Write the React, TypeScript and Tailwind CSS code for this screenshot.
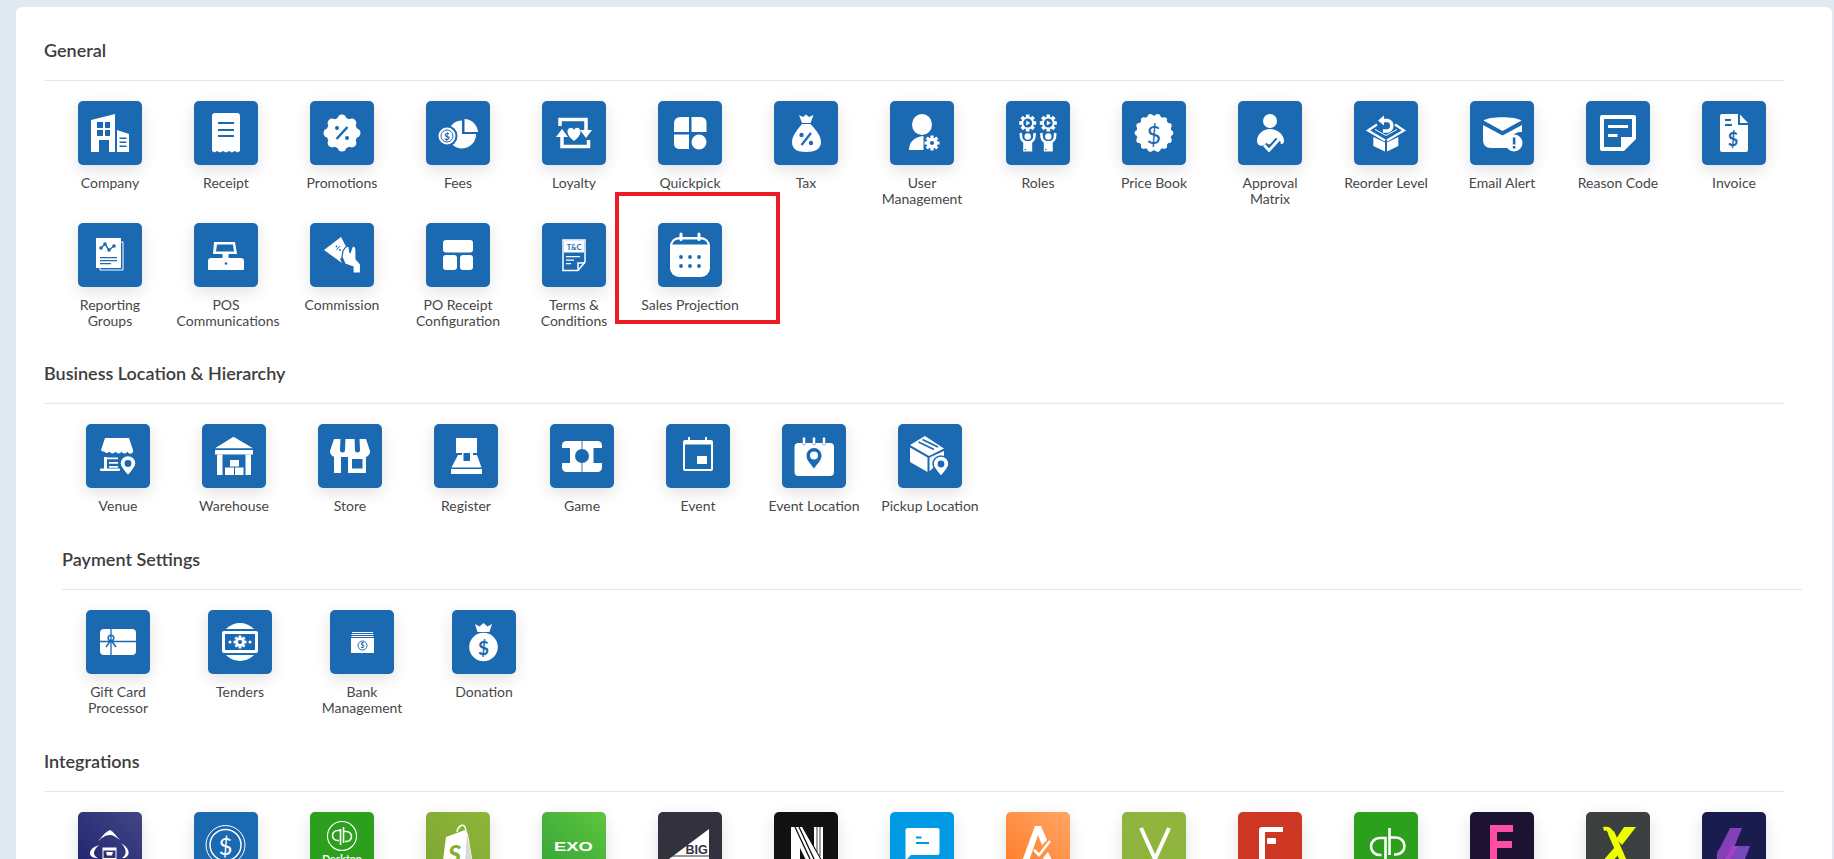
import type { ReactNode } from 'react'

const B = '#1a69b1'
const W = '#ffffff'

type Item = { label: string; icon: ReactNode; bg?: string }

function Scallop({ cx = 32, cy = 32, r = 14, bump = 5.5, n = 8, off = 12.5 }: { cx?: number; cy?: number; r?: number; bump?: number; n?: number; off?: number }) {
  const dots = Array.from({ length: n }, (_, i) => {
    const a = (i / n) * Math.PI * 2
    return <circle key={i} cx={cx + Math.cos(a) * off} cy={cy + Math.sin(a) * off} r={bump} fill={W} />
  })
  return (
    <g>
      <circle cx={cx} cy={cy} r={r} fill={W} />
      {dots}
    </g>
  )
}

function Dollar({ x, y, size = 14, fill = B, weight = 700 }: { x: number; y: number; size?: number; fill?: string; weight?: number }) {
  return (
    <text x={x} y={y} fontSize={size} fontWeight={weight} fontFamily="Lato, sans-serif" fill={fill} textAnchor="middle" dominantBaseline="central">
      $
    </text>
  )
}

function Gear({ cx, cy, r, hole = 0.38 }: { cx: number; cy: number; r: number; hole?: number }) {
  const teeth = Array.from({ length: 4 }, (_, i) => (
    <rect key={i} x={cx - r * 0.21} y={cy - r} width={r * 0.42} height={r * 2} fill={W} transform={`rotate(${i * 45} ${cx} ${cy})`} />
  ))
  return (
    <g>
      {teeth}
      <circle cx={cx} cy={cy} r={r * 0.74} fill={W} />
      <circle cx={cx} cy={cy} r={r * hole} fill={B} />
    </g>
  )
}

function Pin({ x, y, s = 1 }: { x: number; y: number; s?: number }) {
  return (
    <g transform={`translate(${x} ${y}) scale(${s})`}>
      <path d="M0 0 C-5 -6 -8 -9 -8 -12.500 A8 8 0 1 1 8 -12.500 C8 -9 5 -6 0 0 Z" fill={W} stroke={B} strokeWidth="1.500" />
      <circle cx="0" cy="-12.500" r="3.400" fill={B} />
    </g>
  )
}

const Company = (
  <>
    <path d="M13 19 L37 13 V51 H31 V39 H21 V51 H13 Z" fill={W} />
    <path d="M19 21h6v6h-6zM27 21h5v6h-5zM19 29h6v6h-6zM27 29h5v6h-5z" fill={B} />
    <path d="M39 29 L51 33 V51 H39 Z" fill={W} />
    <path d="M41.500 36.500h7v1.500h-7zM41.500 40.500h7v1.500h-7zM41.500 44.500h7v1.500h-7z" fill={B} />
  </>
)

const Receipt = (
  <>
    <path d="M21 12 H43 A3 3 0 0 1 46 15 V50 L43.500 51.500 L41 50 L38 51.500 L35 50 L32 51.500 L29 50 L26 51.500 L23 50 L20.500 51.500 L18 50 V15 A3 3 0 0 1 21 12 Z" fill={W} />
    <path d="M24 21h16v2h-16zM24 28h16v2h-16zM24 34h16v2h-16z" fill={B} />
  </>
)

const Promotions = (
  <>
    <Scallop r={15.500} off={14} bump={4.500} />
    <path d="M26.500 38 L37.500 26" stroke={B} strokeWidth="2.500" />
    <circle cx="27" cy="27" r="2" fill={B} />
    <circle cx="37" cy="37" r="2" fill={B} />
  </>
)

const Fees = (
  <>
    <path d="M36 19.500 V33 H50 A14 14 0 1 1 36 19.500 Z" fill={W} />
    <path d="M38.500 18 A14 14 0 0 1 52 31 H38.500 Z" fill={W} />
    <circle cx="21" cy="35" r="10.500" fill={B} />
    <circle cx="21" cy="35" r="8.500" fill={W} />
    <circle cx="21" cy="35" r="6" fill={W} stroke={B} strokeWidth="1" />
    <Dollar x={21} y={35} size={10} />
  </>
)

const Loyalty = (
  <>
    <path d="M18 25 V18.500 H44 V30" fill="none" stroke={W} strokeWidth="3.500" />
    <path d="M38 29 H50 L44 37 Z" fill={W} />
    <path d="M46.500 39 V45.500 H20 V35" fill="none" stroke={W} strokeWidth="3.500" />
    <path d="M14 36 H26 L20 28 Z" fill={W} />
    <path d="M32 40 C27 36 25.500 33 25.500 30.500 C25.500 26.500 30.500 25.500 32 29 C33.500 25.500 38.500 26.500 38.500 30.500 C38.500 33 37 36 32 40 Z" fill={W} />
  </>
)

const Quickpick = (
  <>
    <path d="M22 16 H31 V31 H16 V22 A6 6 0 0 1 22 16 Z" fill={W} />
    <path d="M33.500 16 H43 A5.500 5.500 0 0 1 48.500 21.500 V31 H33.500 Z" fill={W} />
    <path d="M16 33.500 H31 V48 H21 A5 5 0 0 1 16 43 Z" fill={W} />
    <circle cx="41" cy="41" r="7.500" fill={W} />
  </>
)

const Tax = (
  <>
    <path d="M25 14 L29 16 L32 13.500 L35 16 L39.500 14 L36.500 22 H28 Z" fill={W} />
    <path d="M28 23 H36.500 C42 29 47 35 47 41 C47 48 41 51 32 51 C23 51 18 48 18 41 C18 35 23 29 28 23 Z" fill={W} />
    <path d="M27.500 44 L37 32" stroke={B} strokeWidth="2.200" />
    <circle cx="27.500" cy="34" r="2.200" fill={B} />
    <circle cx="37" cy="42" r="2.200" fill={B} />
  </>
)

const UserManagement = (
  <>
    <ellipse cx="32" cy="23.500" rx="10" ry="10.500" fill={W} />
    <path d="M19 49 C19 41 24 36 33.500 35 V49 Z" fill={W} />
    <Gear cx={42} cy={42} r={7.500} hole={0.28} />
  </>
)

const person = (x: number) => (
  <g key={x}>
    <path d={`M${x - 7} 32 L${x - 6.500} 37 C${x - 6} 39.500 ${x - 4} 40.500 ${x - 3} 41 M${x + 7} 32 L${x + 6.500} 37 C${x + 6} 39.500 ${x + 4} 40.500 ${x + 3} 41`} fill="none" stroke={W} strokeWidth="2.600" />
    <circle cx={x} cy="35.500" r="3.200" fill={W} />
    <rect x={x - 4.500} y="40" width="9" height="10.500" fill={W} />
    <circle cx={x - 2.500} cy="48.500" r="0.800" fill={B} />
  </g>
)

const gearPlay = (x: number) => (
  <g key={x}>
    <Gear cx={x} cy={22} r={8.500} hole={0.52} />
    <path d={`M${x - 1.500} 19.500 L${x + 2.500} 22 L${x - 1.500} 24.500 Z`} fill={W} />
  </g>
)

const Roles = (
  <>
    {gearPlay(21.700)}
    {gearPlay(42.300)}
    {person(21.700)}
    {person(42.300)}
  </>
)

const PriceBook = (
  <>
    <Scallop r={17.500} off={16.500} bump={2.800} n={14} />
    <Dollar x={31.700} y={33} size={25} weight={400} />
  </>
)

const Approval = (
  <>
    <circle cx="32" cy="20" r="7" fill={W} />
    <path d="M19 40 C19 33 25 28 32 28 C39 28 46 33 46 40 C46 43 43.500 44 42 42 L26 44 C23 46 19 44 19 40 Z" fill={W} />
    <path d="M26 44 L31 49.500 L40.500 39" fill="none" stroke={B} strokeWidth="7" />
    <path d="M26 44 L31 49.500 L40.500 39" fill="none" stroke={W} strokeWidth="2.800" />
  </>
)

const Reorder = (
  <>
    <path d="M19.300 36 L31 41.500 V50.500 L19.300 45 Z" fill={W} />
    <path d="M33 41.500 L44.300 36 V45 L33 50.500 Z" fill={W} />
    <path d="M23 23.500 L14 29.500 L31 39.500" fill="none" stroke={W} strokeWidth="2.200" />
    <path d="M41 23.500 L50 29.500 L33 39.500" fill="none" stroke={W} strokeWidth="2.200" />
    <path d="M21 28.500 L32 34.500 L43 28.500" fill="none" stroke={W} strokeWidth="1" />
    <path d="M29 19.500 H34 A5.500 5.500 0 0 1 34 30 H29" fill="none" stroke={W} strokeWidth="3.400" />
    <path d="M24 19.500 L30 14.500 V24.500 Z" fill={W} />
  </>
)

const EmailAlert = (
  <>
    <path d="M13.500 19.500 C19 15 45 15 51.500 19.500 L32.500 30 Z" fill={W} />
    <path d="M13 24 L32.500 34.500 L52 24 V31 C46 30 39 35 38 47 H21 C16 47 13 44 13 39 Z" fill={W} />
    <circle cx="44" cy="42" r="8.500" fill={W} />
    <rect x="42.800" y="36.500" width="2.600" height="7" fill={B} />
    <rect x="42.800" y="45" width="2.600" height="2.600" fill={B} />
  </>
)

const ReasonCode = (
  <>
    <path d="M16 14 H48 A2 2 0 0 1 50 16 V38 L38 50 H16 A2 2 0 0 1 14 48 V16 A2 2 0 0 1 16 14 Z" fill={W} />
    <path d="M18 18 H46 V36 H35 V46 H18 Z" fill={B} />
    <rect x="22" y="24" width="20" height="3" fill={W} />
    <rect x="22" y="33" width="9.500" height="3" fill={W} />
  </>
)

const Invoice = (
  <>
    <path d="M20 13 H36 V24 H46 V49 A2 2 0 0 1 44 51 H20 A2 2 0 0 1 18 49 V15 A2 2 0 0 1 20 13 Z" fill={W} />
    <path d="M38 13.500 L46 22 H38 Z" fill={W} />
    <path d="M23 18h6v2h-6zM23 23h7v2h-7z" fill={B} />
    <Dollar x={31} y={38} size={18} />
  </>
)

const ReportingGroups = (
  <>
    <path d="M22 19 H45 V47 H22 Z" fill="none" stroke={W} strokeWidth="1" />
    <path d="M18 15 H43 V45 H18 Z" fill={W} />
    <path d="M23 25 L27 21 L31 27 L36 23" fill="none" stroke={B} strokeWidth="1.400" />
    <circle cx="23" cy="25" r="1.800" fill={B} />
    <circle cx="27" cy="21" r="1.800" fill={B} />
    <circle cx="31" cy="27" r="1.800" fill={B} />
    <circle cx="36" cy="23" r="1.800" fill={B} />
    <path d="M22 34h17v1.200h-17zM22 37h17v1.200h-17zM22 40h11v1.200h-11z" fill={B} />
  </>
)

const Pos = (
  <>
    <path d="M20 19 H41 L43 31 H19 Z" fill={W} />
    <path d="M23 21.500 H39 L40 28.500 H22 Z" fill={B} />
    <rect x="28.500" y="30" width="6" height="5" fill={W} />
    <path d="M17 35 H47 A3 3 0 0 1 50 38 V46 A1 1 0 0 1 49 47 H15 A1 1 0 0 1 14 46 V38 A3 3 0 0 1 17 35 Z" fill={W} />
    <circle cx="32" cy="40.500" r="1.300" fill={B} />
  </>
)

const Commission = (
  <>
    <path d="M14 27 L31 14 L41 33 L35 38 L33 33 L30 36 L32 40 Z" fill={W} />
    <path d="M26.500 27 L30 23" stroke={B} strokeWidth="1" />
    <circle cx="26.500" cy="23.500" r="0.900" fill={B} />
    <circle cx="30" cy="27" r="0.900" fill={B} />
    <path d="M33 28 C35 24 38 22 39 24 L40 30 L42 24 C44 22 46 24 46 27 V36 L50.500 41 V50 H43 V44 L35 41 L32 34 Z" fill={W} stroke={B} strokeWidth="1.200" />
  </>
)

const PoConfig = (
  <>
    <rect x="17" y="17" width="30" height="12.500" rx="3" fill={W} />
    <rect x="17" y="32" width="14" height="15" rx="3" fill={W} />
    <rect x="34" y="32" width="13" height="15" rx="3" fill={W} />
  </>
)

const Terms = (
  <>
    <path d="M21 17 H43 V39 L36 47.500 H21 Z" fill="none" stroke={W} strokeWidth="1.500" />
    <rect x="22" y="17.500" width="20" height="12" fill={W} />
    <text x="32" y="26.500" fontSize="7.500" fontWeight={700} fontFamily="Lato, sans-serif" fill={B} textAnchor="middle">
      T&amp;C
    </text>
    <path d="M24 33h14v1.200h-14zM24 36.500h8v1.200h-8zM24 40h5v1.200h-5z" fill={W} />
    <path d="M36 47 V40 H43" fill="none" stroke={W} strokeWidth="1.500" />
  </>
)

const SalesProjection = (
  <>
    <path d="M21 14 H43 A9 9 0 0 1 52 23 V45 A9 9 0 0 1 43 54 H21 A9 9 0 0 1 12 45 V23 A9 9 0 0 1 21 14 Z" fill={W} />
    <path d="M21 16.500 H43 A7 7 0 0 1 49.700 21.500 H14.300 A7 7 0 0 1 21 16.500 Z" fill={B} />
    <rect x="21.500" y="9.500" width="3" height="8.500" rx="1.500" fill={W} />
    <rect x="39.500" y="9.500" width="3" height="8.500" rx="1.500" fill={W} />
    {[23, 32, 41].map((x) => (
      <g key={x}>
        <circle cx={x} cy="34" r="1.900" fill={B} />
        <circle cx={x} cy="43" r="1.900" fill={B} />
      </g>
    ))}
  </>
)

const Venue = (
  <>
    <path d="M19 14 H43 L47 26 A2.800 2.800 0 0 1 41.500 27.500 A3.300 3.300 0 0 1 35.500 27.500 A3.300 3.300 0 0 1 29.500 27.500 A3.300 3.300 0 0 1 23.500 27.500 A3.300 3.300 0 0 1 18 27.500 A2.800 2.800 0 0 1 15 26 Z" fill={W} />
    <rect x="18" y="33" width="3" height="12" fill={W} />
    <rect x="14" y="44.500" width="20" height="2.500" rx="1" fill={W} />
    <path d="M21 33.500h11v1.800h-11zM23 38h9v1.800h-9zM23 42h9v1.800h-9z" fill={W} />
    <Pin x={42} y={52} s={1} />
  </>
)

const Warehouse = (
  <>
    <path d="M31.500 12.700 L51 24.300 H13 Z" fill={W} />
    <rect x="13" y="26" width="38" height="4.500" fill={W} />
    <rect x="15" y="30.500" width="5.500" height="20.500" fill={W} />
    <rect x="43.500" y="30.500" width="5.500" height="20.500" fill={W} />
    <rect x="23" y="43.500" width="9" height="7.500" fill={W} />
    <rect x="33" y="43.500" width="8.500" height="7.500" fill={W} />
    <rect x="28" y="36" width="9" height="6.500" fill={W} />
  </>
)

const Store = (
  <>
    <path d="M16 15 H48 L52 27 C52 31 49 33 47 33 H18 C15 33 12 31 12 27 Z" fill={W} />
    <path d="M22.500 14 H27.500 L27 26 A2.500 2.500 0 0 1 22 26 Z" fill={B} />
    <path d="M36.500 14 H41.500 L42 26 A2.500 2.500 0 0 1 37 26 Z" fill={B} />
    <rect x="16" y="33" width="7" height="16" fill={W} />
    <rect x="30" y="33" width="18" height="16" fill={W} />
    <rect x="34" y="35" width="10.500" height="9.500" fill={B} />
  </>
)

const Register = (
  <>
    <rect x="22" y="14" width="21" height="15" fill={W} />
    <path d="M24 31 H43 L47.500 43.500 H17.500 Z" fill={W} />
    <rect x="28" y="29" width="11" height="9.500" fill={W} />
    <rect x="29.500" y="29" width="6.500" height="8" fill={B} />
    <rect x="17" y="45" width="31" height="5" fill={W} />
  </>
)

const Game = (
  <>
    <rect x="12" y="17" width="40" height="31" rx="4.500" fill={W} />
    <rect x="12" y="24" width="8" height="15" fill={B} />
    <rect x="43.500" y="24" width="8.500" height="15" fill={B} />
    <circle cx="32" cy="32" r="7" fill={B} />
    <path d="M32 17 V48" stroke={B} strokeWidth="0.900" />
  </>
)

const Event = (
  <>
    <rect x="17" y="16" width="30" height="31" rx="2" fill={W} />
    <rect x="19" y="20.500" width="26" height="24.500" fill={B} />
    <rect x="22" y="13" width="2" height="5" fill={W} />
    <rect x="39" y="13" width="2" height="5" fill={W} />
    <rect x="31" y="32" width="10" height="8" fill={W} />
  </>
)

const EventLocation = (
  <>
    <rect x="12.500" y="19" width="39.500" height="33" rx="4" fill={W} />
    <rect x="20.500" y="13" width="3" height="8" rx="1.500" fill={W} stroke={B} strokeWidth="0.500" />
    <rect x="30.500" y="13" width="3" height="8" rx="1.500" fill={W} stroke={B} strokeWidth="0.500" />
    <rect x="40.500" y="13" width="3" height="8" rx="1.500" fill={W} stroke={B} strokeWidth="0.500" />
    <path d="M32 44.500 C28 39 24.500 36 24.500 31.500 A7.500 7.500 0 0 1 39.500 31.500 C39.500 36 36 39 32 44.500 Z" fill={B} />
    <circle cx="32" cy="31.500" r="4" fill={W} />
  </>
)

const PickupLocation = (
  <>
    <path d="M12 21 L27 12 L46 24.500 L31 32 Z" fill={W} />
    <path d="M20.500 18 L36 25.500 M24.500 15.500 L40 23" stroke={B} strokeWidth="1.600" />
    <path d="M12 23.500 L29.500 33.500 V48 L12 38 Z" fill={W} />
    <path d="M31.500 33.500 L46 27 V33 L33 46 L31.500 47 Z" fill={W} />
    <Pin x={43} y={52.500} s={1} />
  </>
)

const GiftCard = (
  <>
    <rect x="14" y="19" width="36" height="26" rx="4" fill={W} />
    <path d="M14 31.500 H50 M25 19 V45" stroke={B} strokeWidth="1.300" />
    <circle cx="25" cy="28" r="2.800" fill="none" stroke={B} strokeWidth="1.500" />
    <path d="M25 30 L20 37 M25 30 L30 37" stroke={B} strokeWidth="1.500" />
  </>
)

const Tenders = (
  <>
    <circle cx="32" cy="32" r="19" fill={W} />
    <rect x="12" y="19" width="40" height="26" fill={B} />
    <rect x="14" y="21" width="36" height="22" rx="2" fill={W} />
    <rect x="17" y="24" width="30" height="16" fill={B} />
    <Gear cx={32} cy={32} r={6.500} hole={0.32} />
    <circle cx="22" cy="32" r="1.500" fill={W} />
    <circle cx="42" cy="32" r="1.500" fill={W} />
  </>
)

const Bank = (
  <>
    <path d="M22 22h21v1h-21zM21.500 24h22v1h-22zM21.500 26h22v1h-22z" fill={W} />
    <rect x="21" y="28" width="23" height="15" fill={W} />
    <circle cx="32.500" cy="35.500" r="4.500" fill="none" stroke={B} strokeWidth="1" />
    <Dollar x={32.500} y={35.500} size={6.500} />
  </>
)

const Donation = (
  <>
    <path d="M23 14 L27.500 16.500 L31.500 13 L35.500 16.500 L40 14 L37.500 22 H25.500 Z" fill={W} />
    <circle cx="31.500" cy="37" r="14.300" fill={W} />
    <Dollar x={31.500} y={37} size={19} />
  </>
)

const CloudCart = (
  <>
    <path d="M20 29 C24 25 27 20 32 18 C36 20 38 24 42 28 C38 25 35 23 32 23 C27 23 24 26 20 29 Z" fill={W} />
    <path d="M21 33 C14 35 10 40 13 44 C15 46 18 46 20 46 C15 44 14 39 21 33 Z" fill={W} />
    <path d="M43 31 C50 35 54 42 47 46 L44 46 C50 42 48 36 43 31 Z" fill={W} />
    <rect x="25" y="36" width="13" height="10.500" fill="none" stroke={W} strokeWidth="1" />
    <rect x="25" y="36" width="13" height="2.500" fill={W} />
    <path d="M28 40 H35 L34 43.500 H29 Z" fill={W} />
  </>
)

const DollarRing = (
  <>
    <circle cx="31.500" cy="33" r="19.500" fill="none" stroke={W} strokeWidth="1" />
    <circle cx="31.500" cy="33" r="15.500" fill="none" stroke={W} strokeWidth="1.500" />
    <Dollar x={31.500} y={33} size={24} fill={W} weight={400} />
  </>
)

const QbDesktop = (
  <>
    <circle cx="32" cy="24" r="14.500" fill="none" stroke={W} strokeWidth="1.100" />
    <path d="M30.500 17 V33 M30.500 18.500 H27.500 A5 5 0 0 0 27.500 28.500 H29 M33.500 31 V15 M33.500 19.500 H36.500 A5 5 0 0 1 36.500 29.500 H35" fill="none" stroke={W} strokeWidth="1.600" />
    <text x="32" y="50.500" fontSize="10.500" fontWeight={700} fontFamily="Lato, sans-serif" fill={W} textAnchor="middle">
      Desktop
    </text>
  </>
)

const Shopify = (
  <>
    <path d="M31 20 C32 14 37 11 39 15 C40 17 40 18 40 21" fill="none" stroke={W} strokeWidth="1.500" />
    <path d="M15 64 L20 25 L39 18 L42 22 L49 64 Z" fill={W} />
    <path d="M41 21 L49 64 H38 L41 21 Z" fill="#d9d9d9" />
    <text x="28.500" y="51" fontSize="25" fontWeight={900} fontStyle="italic" fontFamily="Lato, sans-serif" fill="#86ad38" textAnchor="middle">
      S
    </text>
  </>
)

const Exo = (
  <text x="12" y="38.500" fontSize="13" fontWeight={700} fontFamily="'Liberation Sans', sans-serif" fill={W} textLength={39} lengthAdjust="spacingAndGlyphs">
    EXO
  </text>
)

const BigC = (
  <>
    <path d="M51 17 V47 H11 Z" fill={W} />
    <rect x="11" y="43.500" width="40" height="1" fill="#34313f" />
    <text x="38.500" y="41.500" fontSize="12.500" fontWeight={900} fontFamily="'Liberation Sans', sans-serif" fill="#34313f" textAnchor="middle">
      BIG
    </text>
  </>
)

const NLogo = (
  <>
    <path d="M17 15 H28 L49 52 V64 H40 L26 36 V64 H17 Z" fill={W} />
    <path d="M40 15 H49 V50 L40 34 Z" fill={W} />
    <path d="M21 15 L43 62 M25 15 L47 62" stroke="#111111" strokeWidth="1.300" />
    <path d="M43 15 V40 M46 15 V44" stroke="#111111" strokeWidth="0.800" />
  </>
)

const Chat = (
  <>
    <path d="M17.500 16 H47.500 A2 2 0 0 1 49.500 18 V41 A2 2 0 0 1 47.500 43 H21 L17 47 H15.500 V18 A2 2 0 0 1 17.500 16 Z" fill={W} />
    <rect x="26" y="24.500" width="5.500" height="2" fill="#009ae4" />
    <rect x="26" y="30" width="13" height="2" fill="#009ae4" />
  </>
)

const ALogo = (
  <>
    <path d="M15 52 L29 14 H35 L41 28 L36 33 L32 23 L22 52 Z" fill={W} />
    <path d="M28 38 L33 43 L44 29" fill="none" stroke={W} strokeWidth="2.500" />
    <path d="M37 46 L42 40 L48 52 H41 Z" fill={W} />
  </>
)

const VLogo = <path d="M19 16 L33 47 L47 16" fill="none" stroke={W} strokeWidth="4" />

const FRed = (
  <>
    <path d="M21 64 V18 A3 3 0 0 1 24 15 H45 V20 H27 V64 Z" fill={W} />
    <rect x="29" y="26" width="9" height="6" rx="1" fill={W} />
  </>
)

const Qb = (
  <>
    <path d="M31.500 64 V26 H25.500 A8.500 8.500 0 0 0 25.500 43 H27.500" fill="none" stroke={W} strokeWidth="2.600" />
    <path d="M35.500 16 V43" fill="none" stroke={W} strokeWidth="2.600" />
    <path d="M35.500 25.500 H42 A8.500 8.500 0 0 1 42 42.500 H40" fill="none" stroke={W} strokeWidth="2.600" />
  </>
)

const FPink = <path d="M20 13 H43 V20 H27 V29 H42 V36 H27 V64 H20 Z" fill="#ff4fa3" />

const XLogo = (
  <>
    <path d="M17 15 C22 14 25 15 27 19 L40 47 C42 50 45 50 47 49 L50 47 C46 51 38 52 35 46 L22 21 C21 18 19 18 18 19 Z" fill="#eeff00" />
    <path d="M38 15 H50 L36 33 L30 27 Z" fill="#eeff00" />
    <path d="M29 35 L34 41 L24 52 H14 Z" fill="#eeff00" />
    <path d="M28 19 L40 47 L33 47 L22 22 Z" fill="#eeff00" />
  </>
)

const LLogo = (
  <>
    <path d="M28 16 H40 L31 38 C29 43 25 47 20 47 H15 C14 43 16 38 18 36 Z" fill="#8340b8" />
    <path d="M29 34 H48 L43 47 H20 C25 47 28 41 29 34 Z" fill="#7748bd" />
    <path d="M29 34 H36 L28 47 H22 C25 45 28 40 29 34 Z" fill="#a93fc4" />
  </>
)

const general: Item[] = [
  { label: 'Company', icon: Company },
  { label: 'Receipt', icon: Receipt },
  { label: 'Promotions', icon: Promotions },
  { label: 'Fees', icon: Fees },
  { label: 'Loyalty', icon: Loyalty },
  { label: 'Quickpick', icon: Quickpick },
  { label: 'Tax', icon: Tax },
  { label: 'User Management', icon: UserManagement },
  { label: 'Roles', icon: Roles },
  { label: 'Price Book', icon: PriceBook },
  { label: 'Approval\nMatrix', icon: Approval },
  { label: 'Reorder Level', icon: Reorder },
  { label: 'Email Alert', icon: EmailAlert },
  { label: 'Reason Code', icon: ReasonCode },
  { label: 'Invoice', icon: Invoice },
  { label: 'Reporting Groups', icon: ReportingGroups },
  { label: 'POS Communications', icon: Pos },
  { label: 'Commission', icon: Commission },
  { label: 'PO Receipt Configuration', icon: PoConfig },
  { label: 'Terms & Conditions', icon: Terms },
  { label: 'Sales Projection', icon: SalesProjection },
]

const business: Item[] = [
  { label: 'Venue', icon: Venue },
  { label: 'Warehouse', icon: Warehouse },
  { label: 'Store', icon: Store },
  { label: 'Register', icon: Register },
  { label: 'Game', icon: Game },
  { label: 'Event', icon: Event },
  { label: 'Event Location', icon: EventLocation },
  { label: 'Pickup Location', icon: PickupLocation },
]

const payment: Item[] = [
  { label: 'Gift Card Processor', icon: GiftCard },
  { label: 'Tenders', icon: Tenders },
  { label: 'Bank Management', icon: Bank },
  { label: 'Donation', icon: Donation },
]

const integrations: Item[] = [
  { label: '', icon: CloudCart, bg: 'bg-gradient-to-tr from-[#1f2170] to-[#434684]' },
  { label: '', icon: DollarRing },
  { label: '', icon: QbDesktop, bg: 'bg-[#2ca01c]' },
  { label: '', icon: Shopify, bg: 'bg-gradient-to-tr from-[#7da632] to-[#8fb53a]' },
  { label: '', icon: Exo, bg: 'bg-gradient-to-tr from-[#35a336] to-[#5cc53f]' },
  { label: '', icon: BigC, bg: 'bg-[#34313f]' },
  { label: '', icon: NLogo, bg: 'bg-[#111111]' },
  { label: '', icon: Chat, bg: 'bg-[#009ae4]' },
  { label: '', icon: ALogo, bg: 'bg-gradient-to-tr from-[#ff7a1f] to-[#ffa563]' },
  { label: '', icon: VLogo, bg: 'bg-[#8fb53f]' },
  { label: '', icon: FRed, bg: 'bg-[#cf3725]' },
  { label: '', icon: Qb, bg: 'bg-[#2ca01c]' },
  { label: '', icon: FPink, bg: 'bg-[#1e1233]' },
  { label: '', icon: XLogo, bg: 'bg-[#3c4040]' },
  { label: '', icon: LLogo, bg: 'bg-[#1a1c4e]' },
]

function Tile({ item }: { item: Item }) {
  return (
    <div className="flex flex-col items-center pb-4">
      <div className={`h-16 w-16 shrink-0 overflow-hidden rounded-[5px] shadow-[0_5px_16px_rgba(0,0,0,0.12)] ${item.bg ?? 'bg-[#1a69b1]'}`}>
        <svg viewBox="0 0 64 64" width="64" height="64">
          {item.icon}
        </svg>
      </div>
      {item.label && <div className="mt-2.5 w-[99px] text-center text-[14px] leading-4 whitespace-pre-line text-[#474747]">{item.label}</div>}
    </div>
  )
}

function Heading({ title }: { title: string }) {
  return <h2 className="border-b border-[#e4e6e8] pb-[18px] text-[18px] leading-6 font-semibold text-[#3d3d3d]">{title}</h2>
}

export default function App() {
  return (
    <div className="relative h-[859px] overflow-hidden bg-[#e1e9f2] pt-[7px] pr-[2px] pl-4 font-['Lato',sans-serif]">
      <div className="h-[900px] rounded-md bg-white pt-[31px] pr-12 pl-7">
        <Heading title="General" />
        <div className="mt-5 ml-2 grid grid-cols-[repeat(15,116px)]">
          {general.map((item) => (
            <Tile key={item.label} item={item} />
          ))}
        </div>

        <div className="mt-4">
          <Heading title="Business Location & Hierarchy" />
        </div>
        <div className="mt-5 ml-4 grid grid-cols-[repeat(8,116px)]">
          {business.map((item) => (
            <Tile key={item.label} item={item} />
          ))}
        </div>

        <div className="mt-[17px] mr-[-18px] ml-[18px]">
          <Heading title="Payment Settings" />
          <div className="mt-5 ml-[-5px] grid grid-cols-[repeat(4,122px)]">
            {payment.map((item) => (
              <Tile key={item.label} item={item} />
            ))}
          </div>
        </div>

        <div className="mt-[17px]">
          <Heading title="Integrations" />
        </div>
        <div className="mt-5 ml-2 grid grid-cols-[repeat(15,116px)]">
          {integrations.map((item, i) => (
            <Tile key={i} item={item} />
          ))}
        </div>
      </div>

      {/* red annotation box drawn over the page */}
      <div className="absolute top-[192px] left-[615px] h-[132px] w-[165px] border-4 border-[#ed1c24]" />
    </div>
  )
}
